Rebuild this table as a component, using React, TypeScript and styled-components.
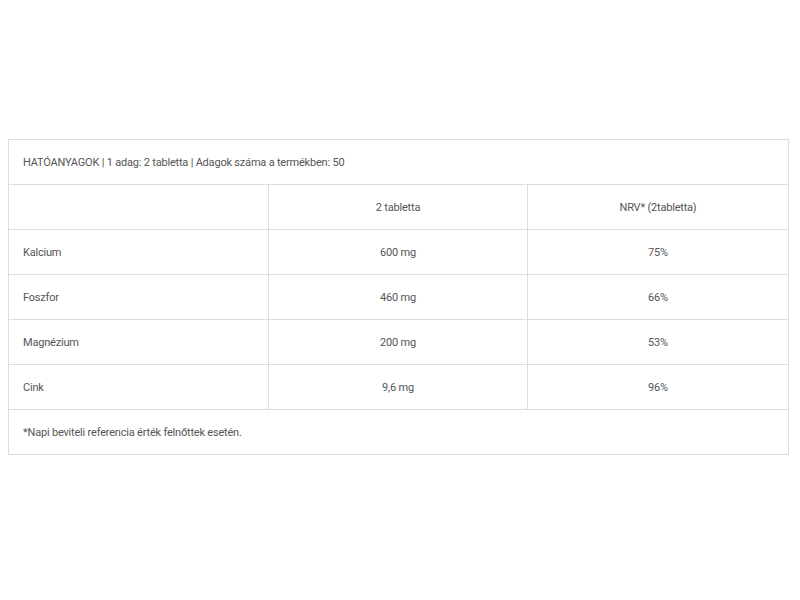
import React from "react";
import styled, { createGlobalStyle } from "styled-components";

const Global = createGlobalStyle`
  body {
    margin: 8px;
    background: #ffffff;
    font-family: Roboto, "Liberation Sans", Arial, sans-serif;
  }
`;

const Page = styled.div`
  padding-top: 131px;
`;

const Table = styled.table`
  width: 780px;
  border-collapse: collapse;
  table-layout: fixed;
  font-family: Roboto, "Liberation Sans", Arial, sans-serif;
  font-size: 11px;
  letter-spacing: -0.2px;
  color: #555555;
`;

const Cell = styled.td<{ $center?: boolean }>`
  border: 1px solid #dddddd;
  height: 45px;
  padding: 2px 14px 0;
  box-sizing: border-box;
  text-align: ${(p) => (p.$center ? "center" : "left")};
  vertical-align: middle;
  line-height: 16px;
`;

type Row = { name: string; amount: string; nrv: string };

const rows: Row[] = [
  { name: "Kalcium", amount: "600 mg", nrv: "75%" },
  { name: "Foszfor", amount: "460 mg", nrv: "66%" },
  { name: "Magnézium", amount: "200 mg", nrv: "53%" },
  { name: "Cink", amount: "9,6 mg", nrv: "96%" },
];

export default function App() {
  return (
    <>
      <Global />
      <Page>
        <Table>
          <colgroup>
            <col style={{ width: "260px" }} />
            <col style={{ width: "259px" }} />
            <col style={{ width: "261px" }} />
          </colgroup>
          <tbody>
            <tr>
              <Cell colSpan={3}>
                HATÓANYAGOK | 1 adag: 2 tabletta | Adagok száma a termékben: 50
              </Cell>
            </tr>
            <tr>
              <Cell />
              <Cell $center>2 tabletta</Cell>
              <Cell $center>NRV* (2tabletta)</Cell>
            </tr>
            {rows.map((r) => (
              <tr key={r.name}>
                <Cell>{r.name}</Cell>
                <Cell $center>{r.amount}</Cell>
                <Cell $center>{r.nrv}</Cell>
              </tr>
            ))}
            <tr>
              <Cell colSpan={3}>*Napi beviteli referencia érték felnőttek esetén.</Cell>
            </tr>
          </tbody>
        </Table>
      </Page>
    </>
  );
}
